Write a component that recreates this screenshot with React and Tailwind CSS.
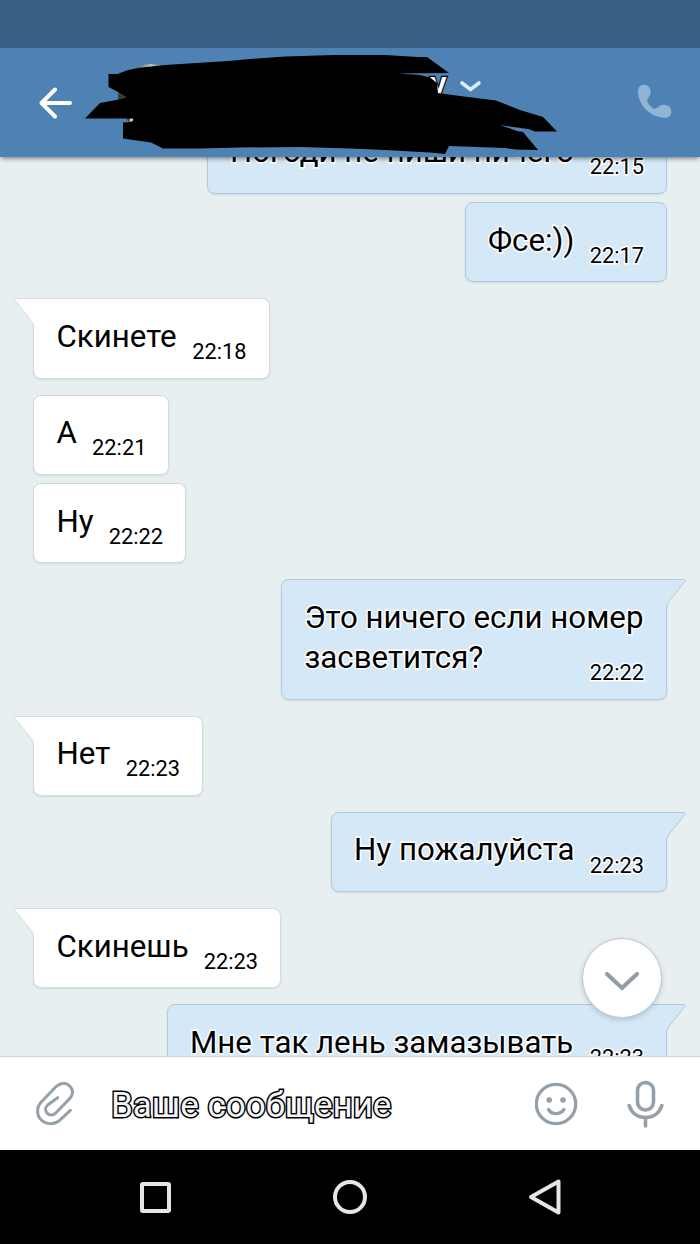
import clsx from "clsx";

const messages = [
  { id: 1, out: true, lines: ["Погоди не пиши ничего"], time: "22:15", width: "w-[460.5px]" },
  { id: 2, out: true, lines: ["Фсе:))"], time: "22:17", gap: "mt-[8.25px]", width: "w-[202.5px]" },
  { id: 3, lines: ["Скинете"], time: "22:18", gap: "mt-4", tail: true, width: "w-[236.5px]" },
  { id: 4, lines: ["А"], time: "22:21", gap: "mt-4", width: "w-[136.4px]" },
  { id: 5, lines: ["Ну"], time: "22:22", gap: "mt-[8.25px]", width: "w-[153px]" },
  { id: 6, out: true, lines: ["Это ничего если номер", "засветится?"], time: "22:22", gap: "mt-4", tail: true, width: "w-[386px]" },
  { id: 7, lines: ["Нет"], time: "22:23", gap: "mt-4", tail: true, width: "w-[170px]" },
  { id: 8, out: true, lines: ["Ну пожалуйста"], time: "22:23", gap: "mt-4", tail: true, width: "w-[336.4px]" },
  { id: 9, lines: ["Скинешь"], time: "22:23", gap: "mt-4", tail: true, width: "w-[248px]" },
  { id: 10, out: true, lines: ["Мне так лень замазывать"], time: "22:23", gap: "mt-4", tail: true, width: "w-[500.5px]" },
];

const Tail = ({ out }) => (
  <svg
    viewBox="0 0 22 32"
    className={clsx(
      "absolute -top-px h-8 w-[22px]",
      out ? "-right-[21px] -scale-x-100" : "-left-[21px]"
    )}
  >
    <path
      d="M22 .5H2.6C1.6 .5 1.2 1.3 1.8 2.1L17.3 21.5C19.8 24.6 20.5 26.5 20.5 30V32H22Z"
      fill={out ? "#d5e8f7" : "#ffffff"}
    />
    <path
      d="M22 .5H2.6C1.6 .5 1.2 1.3 1.8 2.1L17.3 21.5C19.8 24.6 20.5 26.5 20.5 30V32"
      fill="none"
      stroke={out ? "#b3cadb" : "#d2dcde"}
    />
  </svg>
);

const Message = ({ message }) => {
  const { out, lines, time, gap, tail, width } = message;
  const multiline = lines.length > 1;

  return (
    <div className={clsx("flex shrink-0", gap, out && "justify-end")}>
      <div
        className={clsx(
          "relative flex items-end justify-between rounded-lg border pt-[17.5px] pr-[22px] pb-[12.75px] pl-[22.5px] text-black shadow-[0_1px_2px_rgba(90,120,140,0.16)]",
          width,
          out
            ? "border-[#b3cadb] bg-[#d5e8f7] [-webkit-text-stroke:3px_#fdfeff] [paint-order:stroke_fill]"
            : "border-[#d2dcde] bg-white",
          tail && (out ? "rounded-tr-none" : "rounded-tl-none")
        )}
      >
        {tail && <Tail out={out} />}
        <div className="mb-2 text-[31.25px] leading-10 whitespace-nowrap">
          {lines.map((line) => (
            <p key={line}>{line}</p>
          ))}
        </div>
        <span className={clsx("-mb-[0.25px] text-[21.8px] leading-[26px]", multiline && "-ml-[60px]")}>{time}</span>
      </div>
    </div>
  );
};

const Header = () => (
  <header className="relative z-10 flex h-[109px] shrink-0 items-center justify-between bg-[#4e82b4] pr-[27px] pl-[38px] shadow-[0_3px_4px_-1px_rgba(0,0,0,0.4)]">
    <svg viewBox="0 0 36 36" className="h-9 w-9" fill="none" stroke="#fff" strokeWidth="4" strokeLinecap="round" strokeLinejoin="round">
      <path d="M32 18H4M17 4.5L3.5 18L17 31.5" />
    </svg>
    <svg viewBox="860 130 108 110" className="mb-[2px] h-[36.7px] w-9" fill="#91b4d5">
      <path d="M881 135C870 135 863 143 863 155C864 196 898 234 944 234C956 234 963 226 963 216C963 204 954 196 941 195C929 195 922 205 912 208C903 203 893 194 890 183C892 175 901 169 901 157C901 144 892 135 881 135Z" />
    </svg>

    {/* Avatar and name, painted over */}
    <svg viewBox="0 48 700 109" className="absolute inset-0 h-[109px] w-[700px]">
      <defs>
        <linearGradient id="avatar" x1="0" x2="1" y1="0" y2="0">
          <stop offset="0.2" stopColor="#3c3c3a" />
          <stop offset="0.5" stopColor="#c3c6c5" />
          <stop offset="0.8" stopColor="#454745" />
        </linearGradient>
      </defs>
      <circle cx="151" cy="97" r="33" fill="url(#avatar)" />
      <circle cx="131.500" cy="120" r="2" fill="#cfd2d2" />
      <text
        x="430"
        y="95"
        fontSize="34"
        fontWeight="500"
        fill="#fff"
        stroke="#000"
        strokeWidth="2.400"
        paintOrder="stroke"
      >
        у
      </text>
      <path d="M462 83L470.500 89.500L479 83" fill="none" stroke="#dceafa" strokeWidth="3.600" strokeLinecap="round" />
      <path
        fill="#000"
        d="M108.500 74L118 74L120 73L128 70L142 67.500L165 65L228 61L250 59L285 56.500L335 55L385 55L418 57L427 57L449 73L398 73.500L420 75L430 77.500L437 83L438 93L460 96L496 100.500L520 110L543 117L557 131.500L535 131.500L528 129L500 125L517 131L523 132L538 150L516 149.500L505 148L449 146L445 154L430 152.500L385 150L350 148.500L300 147L240 147.500L200 148.500L163 148.500L151 142.500L123 138.500L123 122.500L131 122L133.500 120L133 118.500L85 118.500L100 103L119 99.500L127 97.500L119 92.500L108.500 87Z"
      />
    </svg>
  </header>
);

const Composer = () => (
  <div className="flex h-[94px] shrink-0 items-center border-t border-[#ccd5d8] bg-white text-[#95a1a9]">
    <svg viewBox="105 90 120 140" className="ml-[35px] h-[46.7px] w-10" fill="none" stroke="currentColor" strokeWidth="9" strokeLinecap="round">
      <path d="M211 181L179 211C163 225 138 224 124 210C109 195 109 172 123 157L167 111C180 97 198 97 209 108C221 119 220 135 209 146L168 188C160 197 149 197 142 190C135 183 135 173 143 165L173 143" />
    </svg>
    <p className="mt-[5px] ml-[36px] flex-1 text-[35px] leading-10 whitespace-nowrap text-[#f3f4f7] [-webkit-text-stroke:3px_#000] [paint-order:stroke_fill]">
      Ваше сообщение
    </p>
    <svg viewBox="0 0 44 44" className="h-11 w-11" fill="none" stroke="currentColor" strokeWidth="3.3" strokeLinecap="round">
      <circle cx="21" cy="22" r="19.700" />
      <circle cx="14.200" cy="18" r="2.800" fill="currentColor" stroke="none" />
      <circle cx="28" cy="18" r="2.800" fill="currentColor" stroke="none" />
      <path d="M13.500 27.500C17 33 25 33 29 27.500" />
    </svg>
    <svg viewBox="0 0 38 50" className="mr-[35px] ml-[48.5px] h-[50px] w-[38px]" fill="none" stroke="currentColor" strokeWidth="3.6" strokeLinecap="round">
      <rect x="10.500" y="3.500" width="16" height="27.500" rx="8" />
      <path d="M2.200 26.500C4.500 34 10.500 38.500 18.500 38.500S32.500 34 34.800 26.500M18.500 39V47" />
    </svg>
  </div>
);

const NavBar = () => (
  <nav className="flex h-[94px] shrink-0 items-center bg-black px-[58px]">
    <div className="flex flex-1 justify-center">
      <div className="h-[31px] w-[31px] rounded-[3px] border-4 border-[#e7e5e7]" />
    </div>
    <div className="flex flex-1 justify-center">
      <div className="h-[34px] w-[34px] rounded-full border-4 border-[#e7e5e7]" />
    </div>
    <div className="flex flex-1 justify-center">
      <svg viewBox="0 0 34 38" className="h-[38px] w-[34px]" fill="none" stroke="#e7e5e7" strokeWidth="4" strokeLinejoin="round">
        <path d="M3 19L30.500 3.500V34.500Z" />
      </svg>
    </div>
  </nav>
);

export default function App() {
  return (
    <div className="flex h-[1244px] w-[700px] flex-col overflow-hidden bg-[#e8eff1] font-[Roboto,sans-serif]">
      <div className="h-12 shrink-0 bg-[#395f83]" />
      <Header />

      <main className="relative min-h-0 flex-1 overflow-hidden">
        <div className="-mt-[43.5px] flex flex-col px-[33px]">
          {messages.map((message) => (
            <Message key={message.id} message={message} />
          ))}
        </div>

        {/* Scroll to bottom */}
        <button className="absolute right-[38px] bottom-[38px] flex h-20 w-20 items-center justify-center rounded-full border border-[#bfc9cf] bg-white shadow-[0_2px_5px_rgba(60,80,100,0.25)]">
          <svg viewBox="0 0 36 20" className="mt-[6px] h-5 w-9" fill="none" stroke="#929ea7" strokeWidth="4.2" strokeLinecap="round">
            <path d="M3 3L18 17L33 3" />
          </svg>
        </button>
      </main>

      <Composer />
      <NavBar />
    </div>
  );
}
